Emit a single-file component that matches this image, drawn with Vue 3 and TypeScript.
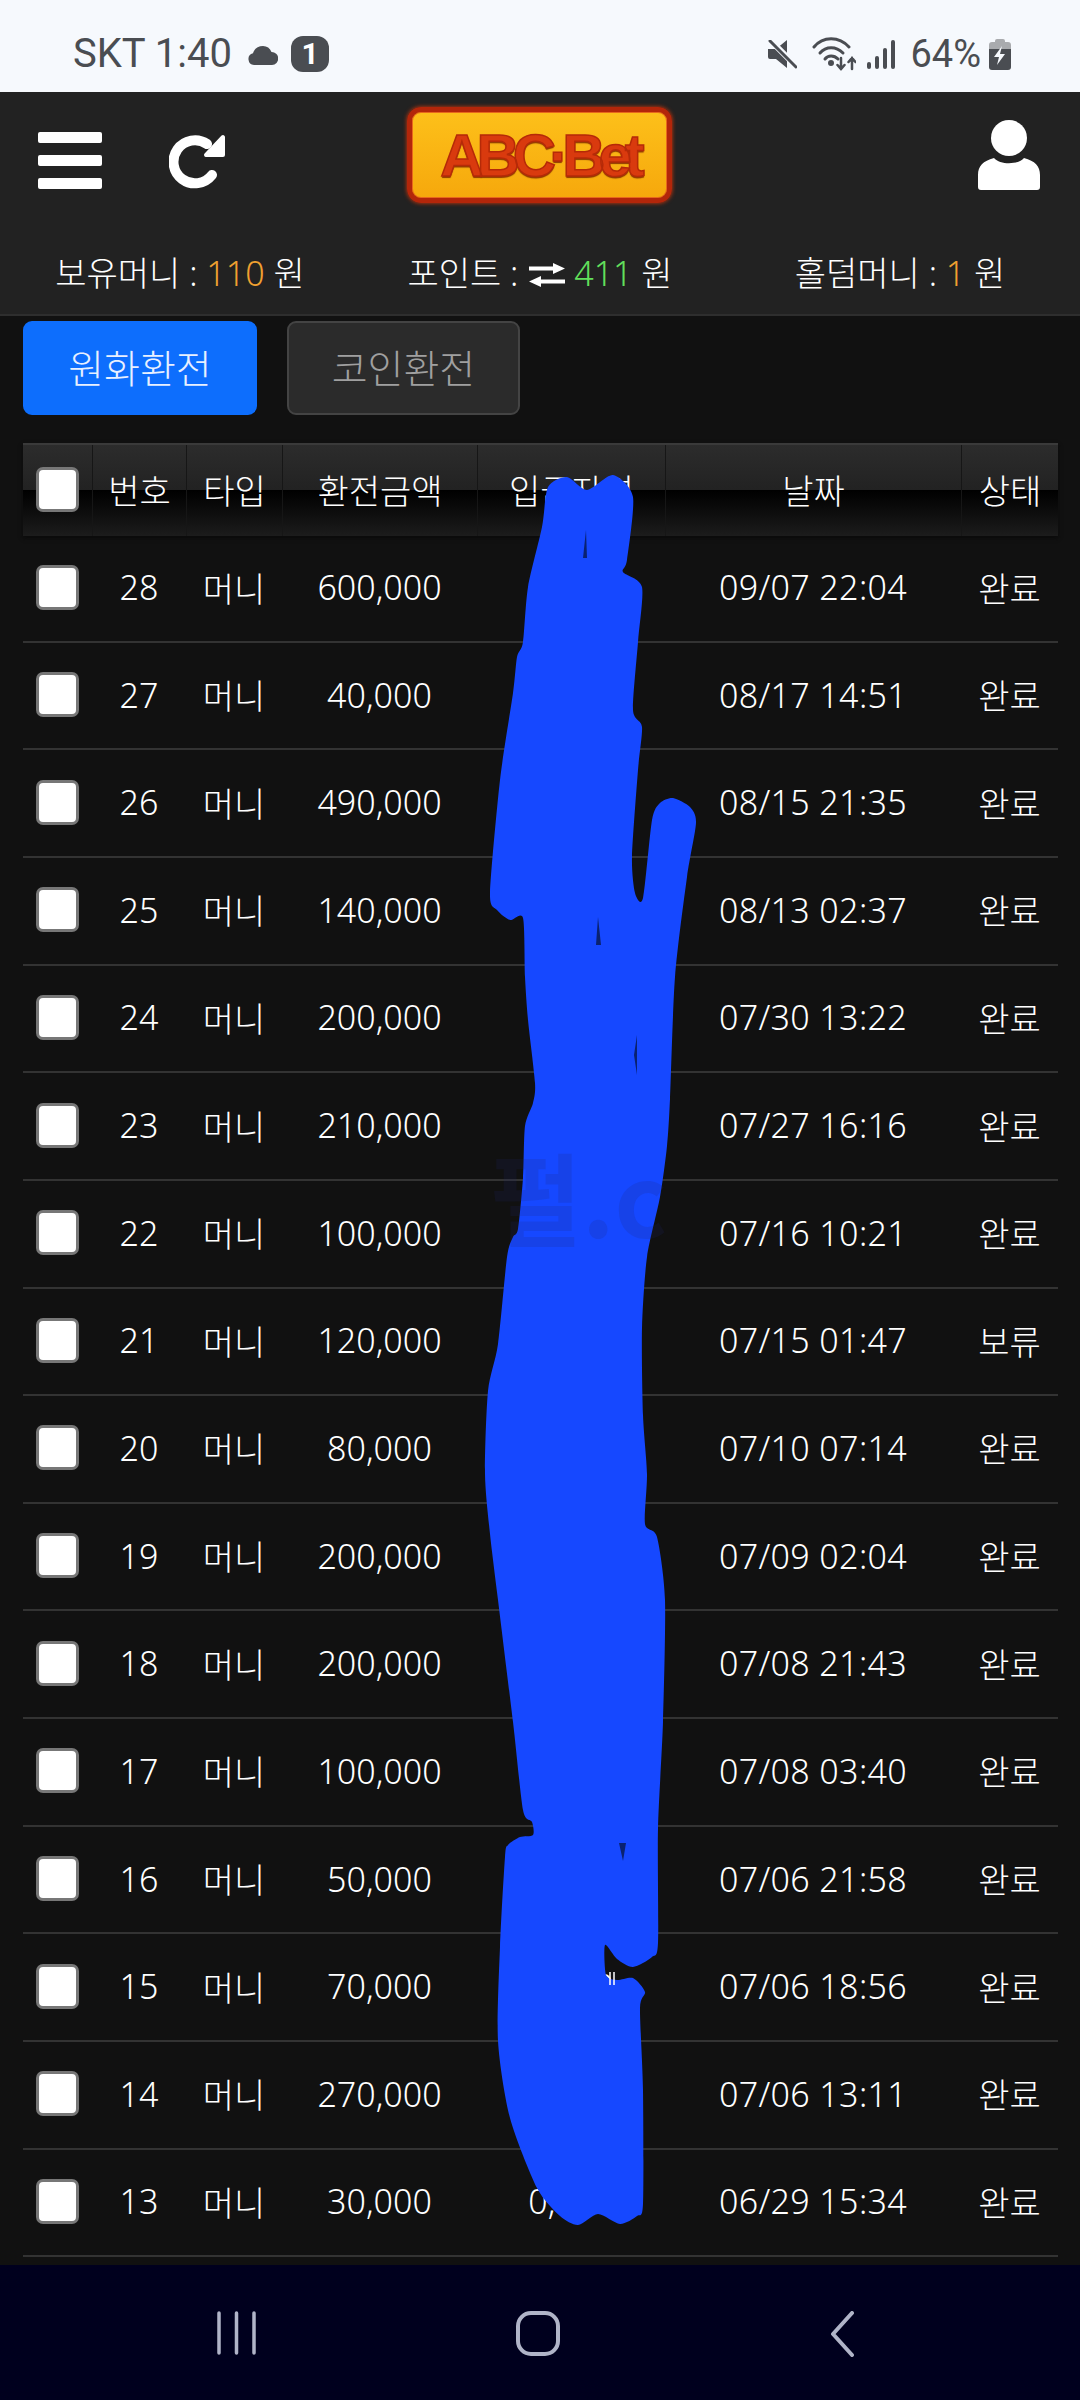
<script setup lang="ts">
interface Row { no: number; amount: string; date: string; status: string }

const rows: Row[] = [
  { no: 28, amount: '600,000', date: '09/07 22:04', status: '완료' },
  { no: 27, amount: '40,000', date: '08/17 14:51', status: '완료' },
  { no: 26, amount: '490,000', date: '08/15 21:35', status: '완료' },
  { no: 25, amount: '140,000', date: '08/13 02:37', status: '완료' },
  { no: 24, amount: '200,000', date: '07/30 13:22', status: '완료' },
  { no: 23, amount: '210,000', date: '07/27 16:16', status: '완료' },
  { no: 22, amount: '100,000', date: '07/16 10:21', status: '완료' },
  { no: 21, amount: '120,000', date: '07/15 01:47', status: '보류' },
  { no: 20, amount: '80,000', date: '07/10 07:14', status: '완료' },
  { no: 19, amount: '200,000', date: '07/09 02:04', status: '완료' },
  { no: 18, amount: '200,000', date: '07/08 21:43', status: '완료' },
  { no: 17, amount: '100,000', date: '07/08 03:40', status: '완료' },
  { no: 16, amount: '50,000', date: '07/06 21:58', status: '완료' },
  { no: 15, amount: '70,000', date: '07/06 18:56', status: '완료' },
  { no: 14, amount: '270,000', date: '07/06 13:11', status: '완료' },
  { no: 13, amount: '30,000', date: '06/29 15:34', status: '완료' },
]

const heads = ['번호', '타입', '환전금액', '입금자명', '날짜', '상태']

// outline of the hand-drawn blue cover, page coordinates
const pts: number[][] = [
  [567, 477], [587, 490], [613, 475], [633, 497], [627, 560], [623, 572], [642, 587], [638, 642], [633, 710], [642, 727],
  [638, 770], [632, 857], [635, 893], [643, 898], [652, 820], [660, 803], [673, 798], [690, 807], [696, 823], [687, 877],
  [675, 977], [670, 1099], [667, 1146], [660, 1197], [647, 1257], [642, 1328], [643, 1415], [647, 1474], [645, 1524], [657, 1537],
  [665, 1600], [663, 1722], [658, 1829], [658, 1943], [652, 1957], [633, 1967], [617, 1959], [605, 1945], [606, 1975],
  [617, 1980], [633, 1978], [645, 1992], [640, 2008], [643, 2090], [643, 2204], [637, 2216], [620, 2224], [598, 2214], [578, 2225],
  [560, 2216], [537, 2188], [510, 2118], [498, 2041], [500, 1947], [505, 1857], [508, 1845], [520, 1837], [533, 1835], [532, 1822],
  [523, 1810], [513, 1722], [498, 1600], [490, 1534], [485, 1474], [488, 1391], [498, 1344], [507, 1257], [513, 1237],
  [518, 1229], [523, 1178], [525, 1126], [533, 1103], [535, 1083], [528, 1020], [525, 977], [523, 918], [510, 920], [497, 910],
  [490, 893], [500, 780], [513, 693], [517, 657], [523, 642], [528, 587], [542, 527], [548, 487],
]

function smooth(p: number[][]) {
  const n = p.length
  let d = `M${p[0][0]} ${p[0][1]}`
  for (let i = 0; i < n; i++) {
    const a = p[(i - 1 + n) % n], b = p[i], c = p[(i + 1) % n], e = p[(i + 2) % n]
    const c1 = [b[0] + (c[0] - a[0]) / 8, b[1] + (c[1] - a[1]) / 8]
    const c2 = [c[0] - (e[0] - b[0]) / 8, c[1] - (e[1] - b[1]) / 8]
    d += `C${c1[0]} ${c1[1]} ${c2[0]} ${c2[1]} ${c[0]} ${c[1]}`
  }
  return d + 'Z'
}
const coverPath = smooth(pts)
</script>

<template>
  <div class="page">
    <div class="statusbar">
      <div class="st-left">
        <span class="st-text">SKT 1:40</span>
        <svg class="cloud" width="30" height="19" viewBox="0 0 30 19"><path d="M6 19a6 6 0 0 1-1-11.8C6 3 10 0 15 0c4 0 7 2 8.500 6A6.500 6.500 0 0 1 24 19z" fill="#4a4d52" /></svg>
        <span class="badge">1</span>
      </div>
      <div class="st-right">
        <svg width="29" height="29" viewBox="0 0 29 29">
          <path d="M0 9h8L19 0v28L8 19H2a2 2 0 0 1-2-2z" fill="#4a4d52" />
          <path d="M2 0l27 27" stroke="#f6f9fd" stroke-width="6" />
          <path d="M2 1l26 26" stroke="#4a4d52" stroke-width="3" stroke-linecap="round" />
        </svg>
        <svg class="wifi" width="44" height="34" viewBox="0 0 44 34" fill="none" stroke="#4a4d52" stroke-width="3" stroke-linecap="round">
          <path d="M2 10C11 -1 27 -1 37 10" />
          <path d="M8 16C14 9 24 9 31 16" />
          <path d="M13 22C16 18 22 18 26 22" />
          <circle cx="19" cy="26" r="1.500" fill="#4a4d52" />
          <path d="M29 21v11M25.500 28l3.500 4 3.500-4M40 32V21M36.500 25l3.500-4 3.500 4" stroke-width="2.500" />
        </svg>
        <svg class="signal" width="28" height="29" viewBox="0 0 28 29" fill="#4a4d52">
          <rect x="0" y="22" width="4" height="7" rx="2" />
          <rect x="8" y="16" width="4" height="13" rx="2" />
          <rect x="16" y="8" width="4" height="21" rx="2" />
          <rect x="24" y="0" width="4" height="29" rx="2" />
        </svg>
        <span class="st-text pct">64%</span>
        <svg width="22" height="32" viewBox="0 0 22 32">
          <path d="M6 3a2 2 0 0 1 2-2h6a2 2 0 0 1 2 2v1h3a3 3 0 0 1 3 3v4H0V7a3 3 0 0 1 3-3h3z" fill="#a9abae" />
          <path d="M0 11h22v18a3 3 0 0 1-3 3H3a3 3 0 0 1-3-3z" fill="#4a4d52" />
          <path d="M13 8L5 19h5l-2 8 8-11h-5z" fill="#f6f9fd" />
        </svg>
      </div>
    </div>

    <header class="top">
      <div class="toolbar">
        <div class="tools-left">
          <div class="burger"><i></i><i></i><i></i></div>
          <svg class="refresh" width="57" height="55" viewBox="0 0 57 55">
            <path d="M38 10A21.500 21.500 0 1 0 43 41" fill="none" stroke="#fff" stroke-width="10" stroke-linecap="round" />
            <path d="M55 3v18a1 1 0 0 1-1 1H37a1 1 0 0 1-.7-1.700L53.300 2.300A1 1 0 0 1 55 3z" fill="#fff" stroke="#fff" stroke-width="2" stroke-linejoin="round" />
          </svg>
        </div>
        <div class="logo"><span>ABC·Bet</span></div>
        <div class="tools-right">
          <svg width="62" height="72" viewBox="0 0 62 72" fill="#fff">
            <circle cx="31" cy="19" r="18" />
            <path d="M0 68V56C0 47 5 42 16 39 22 46 40 46 46 39 57 42 62 47 62 56V68a3 3 0 0 1-3 3H3a3 3 0 0 1-3-3z" />
          </svg>
        </div>
      </div>
      <div class="info">
        <div>보유머니 : <span class="orange">110</span> 원</div>
        <div>
          포인트 :
          <svg class="swap" width="36" height="24" viewBox="0 0 36 24" fill="#fff">
            <path d="M0 3.500h24V0l12 5.500-12 5.500V7.500H0z" />
            <path d="M36 16.500H12V13L0 18.500 12 24v-3.500h24z" />
          </svg>
          <span class="green">411</span> 원
        </div>
        <div>홀덤머니 : <span class="orange">1</span> 원</div>
      </div>
    </header>

    <main class="body">
      <div class="tabs">
        <button class="tab on">원화환전</button>
        <button class="tab">코인환전</button>
      </div>

      <div class="table">
        <div class="row head">
          <div class="cell"><input type="checkbox" class="check" /></div>
          <div v-for="h in heads" :key="h" class="cell">{{ h }}</div>
        </div>
        <div v-for="r in rows" :key="r.no" class="row">
          <div class="cell"><input type="checkbox" class="check" /></div>
          <div class="cell">{{ r.no }}</div>
          <div class="cell">머니</div>
          <div class="cell">{{ r.amount }}</div>
          <div class="cell">0,000</div>
          <div class="cell date">{{ r.date }}</div>
          <div class="cell">{{ r.status }}</div>
        </div>
      </div>
    </main>

    <nav class="navbar">
      <svg width="39" height="44" viewBox="0 0 39 44" stroke="#b0b4c8" stroke-width="3.500" stroke-linecap="round">
        <path d="M2 2v40M19.500 2v40M37 2v40" />
      </svg>
      <svg width="44" height="45" viewBox="0 0 44 45" fill="none" stroke="#b0b4c8" stroke-width="4">
        <rect x="2" y="2" width="40" height="41" rx="13" />
      </svg>
      <svg class="back" width="24" height="46" viewBox="0 0 24 46" fill="none" stroke="#b0b4c8" stroke-width="4" stroke-linecap="round" stroke-linejoin="round">
        <path d="M22 2L3 23l19 21" />
      </svg>
    </nav>

    <svg class="cover" width="1080" height="2400" viewBox="0 0 1080 2400">
      <path :d="coverPath" fill="#1648ff" />
      <path d="M586 530l-3 28h4zM598 917l-2 28h5zM637 1035l-3 20 3 20zM619 1843h7l-3 18z" fill="#0a2270" />
      <path d="M610 1972v13M614 1972v13" stroke="#fff" stroke-width="1.500" />
    </svg>
    <div class="watermark">펄.c</div>
  </div>
</template>

<style scoped>
.page { position: relative; width: 1080px; height: 2400px; display: flex; flex-direction: column; background: #111; color: #fff; font-family: "Noto Sans", "Noto Sans CJK KR", sans-serif; font-size: 34px; font-weight: 300; overflow: hidden; }

.statusbar { height: 92px; flex: none; box-sizing: border-box; padding: 0 69px 0 73px; display: flex; justify-content: space-between; align-items: center; background: #f6f9fd; color: #4a4d52; font-family: Roboto, sans-serif; }
.st-left, .st-right { display: flex; align-items: center; padding-top: 16px; }
.st-text { font-size: 40px; line-height: 40px; font-weight: 400; }
.cloud { margin-left: 16px; margin-top: 2px; }
.badge { margin-left: 13px; width: 38px; height: 36px; border-radius: 12px; background: #4a4d52; color: #fff; font-size: 30px; font-weight: 700; line-height: 36px; text-align: center; }
.wifi { margin-left: 15px; }
.signal { margin-left: 11px; }
.pct { font-size: 38px; margin: 0 8px 0 15px; }

.top { flex: none; height: 224px; box-sizing: border-box; background: #222; border-bottom: 2px solid #2e2e2e; padding-top: 15px; }
.toolbar { display: grid; grid-template-columns: 1fr 265px 1fr; align-items: center; padding: 0 40px 0 38px; height: 96px; }
.tools-left { display: flex; align-items: center; gap: 67px; padding-top: 10px; }
.tools-right { display: flex; justify-content: flex-end; }
.burger { width: 64px; display: flex; flex-direction: column; gap: 12px; }
.burger i { display: block; height: 11px; border-radius: 2px; background: #fff; }
.refresh { margin-top: 2px; }

.logo { height: 96px; box-sizing: border-box; border: 5px solid #b3260a; border-radius: 14px; box-shadow: 0 0 4px #d8380a, inset 0 0 0 1px #e8681c; background: linear-gradient(#fdc01a, #f6a80c); display: flex; align-items: center; justify-content: center; }
.logo span { font-family: "Liberation Sans", sans-serif; font-size: 60px; font-weight: 700; letter-spacing: -7px; color: #d93a0e; -webkit-text-stroke: 1.500px #b52a08; text-shadow: 0 2px 1px #8e3a00; }

.info { display: grid; grid-template-columns: repeat(3, 1fr); text-align: center; margin-top: 48px; line-height: 44px; }
.orange { color: #f0a030; }
.green { color: #62e05c; }
.swap { vertical-align: -1px; margin: 0 9px 0 2px; }

.body { flex: 1; padding: 5px 22px 0 23px; }
.tabs { display: flex; gap: 30px; }
.tab { width: 233px; height: 94px; box-sizing: border-box; border-radius: 9px; border: 2px solid #444; background: #2b2b2b; color: #a0a0a0; font: inherit; font-size: 39px; padding-bottom: 6px; }
.tab.on { width: 234px; border-color: #0d6efd; background: #0d6efd; color: #e8f0ff; }

.table { margin-top: 28px; }
.row { display: grid; grid-template-columns: 69px 94px 96px 195px 188px 296px 97px; height: 107.65px; box-sizing: border-box; border-bottom: 2px solid #333; }
.row.head { height: 93px; border-bottom: 0; border-top: 2px solid #3a3a3a; background: linear-gradient(#2c2c2c, #222 50%, #000 50%, #1c1c1c); box-shadow: 0 2px 4px #0a0a0a; }
.row.head .cell + .cell { border-left: 1px solid #161616; }
.row.head + .row { height: 106.70px; }
.cell { display: flex; align-items: center; justify-content: center; white-space: nowrap; padding-bottom: 2px; }
.date { letter-spacing: 0.36px; }
.check { appearance: none; width: 43px; height: 45px; margin: 0; box-sizing: border-box; border: 3px solid #777; border-radius: 7px; background: #fff; }

.navbar { flex: none; height: 135px; background: #00001e; box-sizing: border-box; padding: 46px 0 0 217px; display: flex; gap: 260px; align-items: flex-start; }
.back { margin-left: 10px; }

.cover { position: absolute; left: 0; top: 0; pointer-events: none; }
.watermark { position: absolute; left: 490px; top: 1135px; font-family: "Noto Sans CJK KR", sans-serif; font-size: 100px; line-height: 120px; font-weight: 700; color: rgba(30, 40, 110, 0.16); pointer-events: none; }
</style>
